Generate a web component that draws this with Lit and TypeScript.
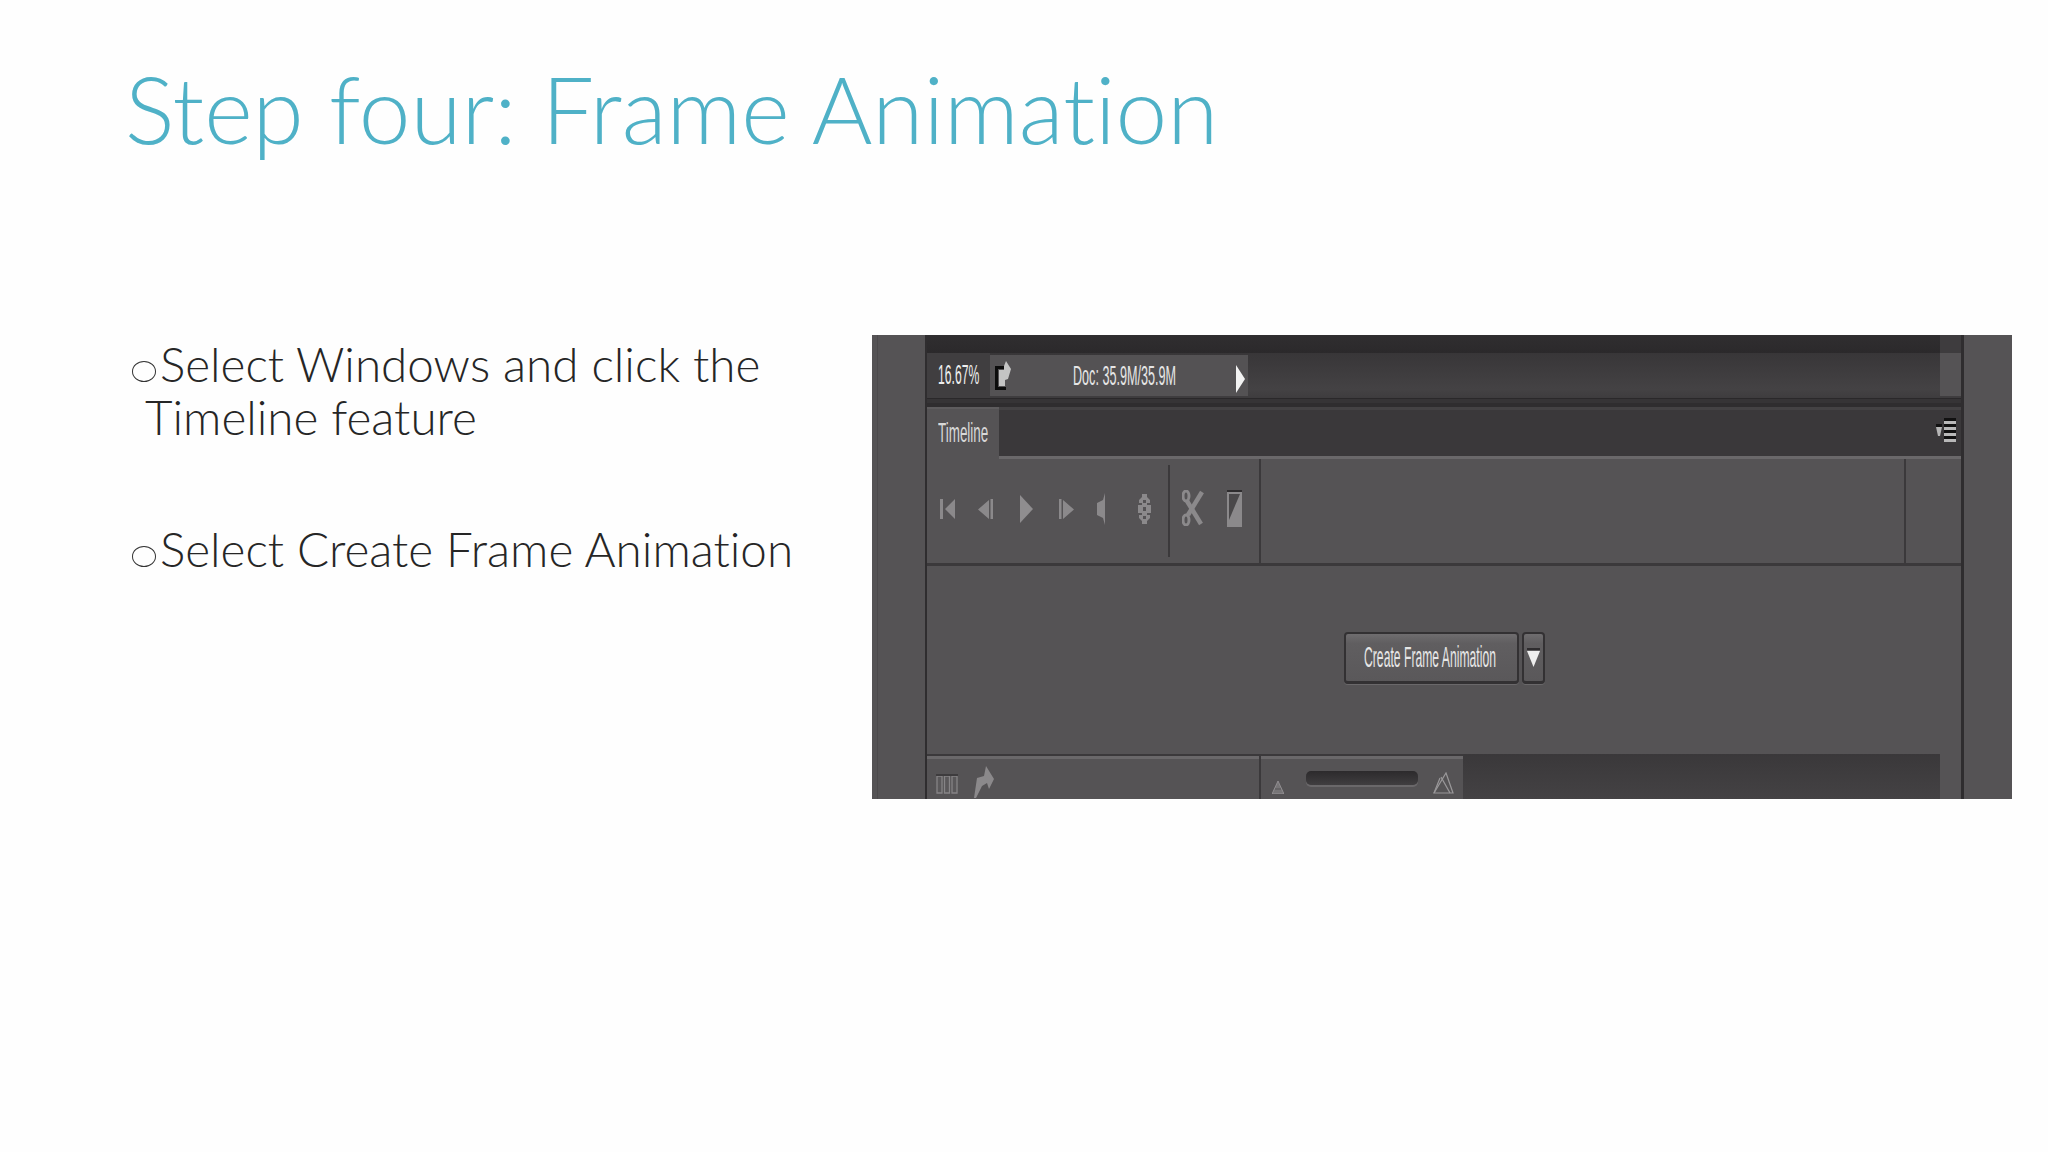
import { LitElement, html, css, svg } from "lit";
import { customElement } from "lit/decorators.js";

const ic = (w: number, h: number, body: unknown) =>
  html`<svg width=${w} height=${h} viewBox="0 0 ${w} ${h}">${body}</svg>`;

const toolIcons = [
  ic(15, 22, svg`<path d="M0 1h3v20H0z M15 1v20L5 11z" fill="#8b898b"/>`),
  ic(15, 24, svg`<path d="M11 3v19L0 12.5z M12.5 2h2.5v20h-2.5z" fill="#8b898b"/>`),
  ic(13, 28, svg`<path d="M0 0l13 14L0 28z" fill="#8f8d8f"/>`),
  ic(15, 24, svg`<path d="M0 2h2.5v20H0z M4 3v19l11-9.5z" fill="#8b898b"/>`),
  ic(8, 32, svg`<path d="M8 0v32L6 25 0 22V10l6-3z" fill="#8b898b"/>`),
  ic(13, 30, svg`<path d="M4 0h5v3l3 3v3H9v2h4v8H9v2h3v3l-3 3v3H4v-3l-3-3v-3h3v-2H0v-8h4V9H1V6l3-3z M5 6v3h3V6z M5 13v4h3v-4z M5 22v3h3v-3z" fill="#8b898b" fill-rule="evenodd"/>`),
];

@customElement("app-root")
export class AppRoot extends LitElement {
  static styles = css`
    :host { display: block; width: 2048px; height: 1152px; background: #fefefe; overflow: hidden; font-family: Lato, "Open Sans", sans-serif; font-variant-ligatures: none; }
    h1 { margin: 0; padding: 49px 0 0 125px; height: 335px; box-sizing: border-box; font-weight: 300; font-size: 92.8px; line-height: 118px; color: #4fb1c7; }
    .content { display: flex; }
    .text { width: 872px; box-sizing: border-box; padding: 3px 0 0 132px; color: #262626; font-weight: 300; font-size: 47.6px; line-height: 52.5px; }
    .item { display: flex; align-items: flex-start; margin-bottom: 80px; }
    .dot { width: 24px; height: 21px; box-sizing: border-box; border: 1.6px solid #333; border-radius: 50%; margin: 23px 4px 0 0; flex: none; }
    .line2 { display: block; margin-left: -15px; }

    .shot { width: 1140px; height: 464px; background: #555355; display: flex; overflow: hidden; font-family: "Liberation Sans", sans-serif; color: #e6e6e6; }
    .gutter { width: 55px; flex: none; border-right: 2px solid #2f2d2f; box-sizing: border-box; background: linear-gradient(90deg, #555355 5px, #4c4a4c 5px 6px, #555355 6px); }
    .gutter.right { width: 51px; border-right: 0; border-left: 3px solid #2f2d2f; background: #555355; }
    .col { flex: 1; min-width: 0; display: flex; flex-direction: column; }
    .band-top { height: 18px; flex: none; display: flex; background: linear-gradient(#302e30, #2b292b); }
    .band-top .end { margin-left: auto; width: 21px; background: #3e3c3e; }

    .status { height: 46px; flex: none; display: flex; background: linear-gradient(#383638, #444244 80%, #3e3c3e); border-bottom: 1px solid #2a282a; box-sizing: border-box; }
    .zoom { width: 63px; display: flex; align-items: center; padding-left: 11px; box-sizing: border-box; background: #403e40; }
    .doc { width: 258px; margin: 2px 0; display: flex; align-items: center; background: #545254; padding: 0 3px 0 4px; box-sizing: border-box; }
    .doc svg { flex: none; }
    .doc .mid { flex: 1; padding-left: 61px; min-width: 0; }
    .doc .tip { display: flex; margin-top: 6px; flex: none; }
    .status .end { margin-left: auto; width: 21px; margin-bottom: 2px; background: #555355; }
    .cond { display: inline-block; width: 0; transform-origin: left center; white-space: nowrap; line-height: 1; }
    .zoom .cond { font-size: 27px; transform: scaleX(0.45); color: #eee; }
    .doc .cond { font-size: 28px; transform: scaleX(0.45); }
    .gap { height: 8px; flex: none; background: linear-gradient(#363436 0 4px, #2f2d2f 4px); }

    .tabs { height: 49px; flex: none; display: flex; background: linear-gradient(#444244 0 3px, #3a383a 3px); }
    .tab { width: 72px; background: linear-gradient(#5e5c5e 0 2px, #555355 2px); display: flex; align-items: center; padding: 2px 0 0 11px; box-sizing: border-box; }
    .tab .cond { font-size: 28px; transform: scaleX(0.48); color: #d8d8d8; }
    .menu { margin: 11px 5px 0 auto; }
    .rule { height: 3px; flex: none; background: linear-gradient(90deg, #555355 72px, #6a686a 72px); }
    .tool { height: 107px; flex: none; display: flex; border-bottom: 3px solid #3b393b; box-sizing: border-box; background: #555355; }
    .players { width: 243px; flex: none; display: grid; grid-template-columns: 41px 35px 47px 33px 36px 50px; align-items: center; justify-items: center; padding: 0 0 4px 0; box-sizing: border-box; border-right: 2px solid #3b393b; margin: 6px 0; }
    .tools { width: 91px; flex: none; display: flex; align-items: center; gap: 23px; padding: 0 0 6px 12px; box-sizing: border-box; border-right: 2px solid #3b393b; }
    .spacer { flex: 1; border-right: 2px solid #3b393b; }
    .tail { width: 55px; flex: none; }

    .main { flex: 1; min-height: 0; display: flex; padding: 66px 0 0 417px; box-sizing: border-box; }
    .main-inner { display: flex; gap: 3px; height: 52px; }
    .btn { box-sizing: border-box; height: 52px; border: 2px solid #333133; border-bottom-width: 3px; border-radius: 4px; background: linear-gradient(#6f6d6f, #605e60 20%, #5a585a); box-shadow: 0 1px 0 #6a686a; display: flex; align-items: center; }
    .btn.big { width: 175px; padding-left: 18px; }
    .btn.big .cond { font-size: 29px; transform: scaleX(0.42); }
    .btn.drop { width: 23px; justify-content: center; }

    .bottom { height: 45px; flex: none; display: flex; background: linear-gradient(#3a383a, #444244); }
    .left { width: 536px; flex: none; display: flex; background: linear-gradient(#3b393b 0 2px, #6a686a 2px 5px, #555355 5px); }
    .frames { width: 334px; flex: none; display: flex; align-items: flex-start; gap: 16px; padding: 20px 0 0 9px; box-sizing: border-box; border-right: 2px solid #3b393b; }
    .frames .arrow { display: flex; margin-top: -8px; }
    .slider { flex: 1; display: flex; align-items: flex-start; padding: 17px 0 0 11px; box-sizing: border-box; }
    .slider .small { margin-top: 10px; display: flex; flex: none; }
    .slider .large { display: flex; flex: none; margin: 1px 0 0 15px; }
    .track { width: 112px; height: 14px; flex: none; border-radius: 5px; background: linear-gradient(#2c2a2c, #403e40); box-shadow: 0 2px 0 #6a686a; margin-left: 22px; }
    .bottom .end { margin-left: auto; width: 21px; background: #555355; }
  `;

  render() {
    return html`
      <h1>Step four: Frame Animation</h1>
      <div class="content">
        <div class="text">
          <div class="item"><span class="dot"></span><span>Select Windows and click the<span class="line2">Timeline feature</span></span></div>
          <div class="item"><span class="dot"></span><span>Select Create Frame Animation</span></div>
        </div>
        <div class="shot">
          <div class="gutter"></div>
          <div class="col">
            <div class="band-top"><span class="end"></span></div>
            <div class="status">
              <div class="zoom"><span class="cond">16.67%</span></div>
              <div class="doc">
                ${ic(18, 32, svg`<path d="M1 6h9v3H4v18h8v3H1z" fill="#0c0c0c"/><path d="M5 10h5V6l2-5 5 8-3 10-3 1v6H5z" fill="#c4c4c4"/>`)}
                <div class="mid"><span class="cond">Doc: 35.9M/35.9M</span></div>
                <span class="tip">${ic(9, 28, svg`<path d="M0 0l9 14L0 28z" fill="#f2f2f2"/>`)}</span>
              </div>
              <span class="end"></span>
            </div>
            <div class="gap"></div>
            <div class="tabs">
              <div class="tab"><span class="cond">Timeline</span></div>
              <div class="menu">
                ${ic(20, 26, svg`<path d="M0 6h6v3H0z" fill="#111"/><path d="M0 9h6l-2 9H2z" fill="#b5b5b5"/><path d="M8 0h12v3H8z M8 6h12v3H8z M8 12h12v3H8z M8 18h12v3H8z" fill="#111"/><path d="M8 3h12v3H8z M8 9h12v3H8z M8 15h12v3H8z M8 21h12v3H8z" fill="#b8b8b8"/>`)}
              </div>
            </div>
            <div class="rule"></div>
            <div class="tool">
              <div class="players">${toolIcons}</div>
              <div class="tools">
                ${ic(22, 36, svg`<g stroke="#8b898b" fill="none"><path d="M5 11L19 34" stroke-width="4.5"/><path d="M20 2L6 25" stroke-width="4.5"/><ellipse cx="4" cy="6" rx="3" ry="5" stroke-width="3"/><ellipse cx="4" cy="30" rx="3" ry="5" stroke-width="3"/></g>`)}
                ${ic(15, 37, svg`<path d="M0 0h15v37H0z" fill="#8b898b"/><path d="M0 0h15v2H0z" fill="#2e2c2e"/><path d="M2 4h11L2 30z" fill="#4a484a"/>`)}
              </div>
              <div class="spacer"></div>
              <div class="tail"></div>
            </div>
            <div class="main">
              <div class="main-inner">
                <div class="btn big"><span class="cond">Create Frame Animation</span></div>
                <div class="btn drop">${ic(13, 20, svg`<path d="M0 0h13v2H0z" fill="#2e2c2e"/><path d="M0 3h13l-6.5 16z" fill="#eeeeee"/>`)}</div>
              </div>
            </div>
            <div class="bottom">
              <div class="left">
                <div class="frames">
                  ${ic(22, 20, svg`<g fill="#5a585a" stroke="#868486" stroke-width="1.3"><path d="M1 2h5v17H1z M8.5 2h5v17h-5z M16 2h5v17h-5z"/></g><path d="M0 0h22v2H0z" fill="#3e3c3e"/>`)}
                  <span class="arrow">${ic(20, 32, svg`<path d="M12 0l8 13-5 10-2-6-5 3-6 12H0L3 12l7-2z" fill="#8b898b"/>`)}</span>
                </div>
                <div class="slider">
                  <span class="small">${ic(12, 13, svg`<path d="M6 0l6 13H0z" fill="#777577" stroke="#9a989a" stroke-width=".8"/><path d="M3 8h6" stroke="#555355"/>`)}</span>
                  <div class="track"></div>
                  <span class="large">${ic(21, 22, svg`<g fill="none" stroke="#9a989a" stroke-width="1.2"><path d="M13 1l7 20H1z"/><path d="M7 6l-6 15"/><path d="M8 5l9 16"/></g>`)}</span>
                </div>
              </div>
              <span class="end"></span>
            </div>
          </div>
          <div class="gutter right"></div>
        </div>
      </div>
    `;
  }
}
